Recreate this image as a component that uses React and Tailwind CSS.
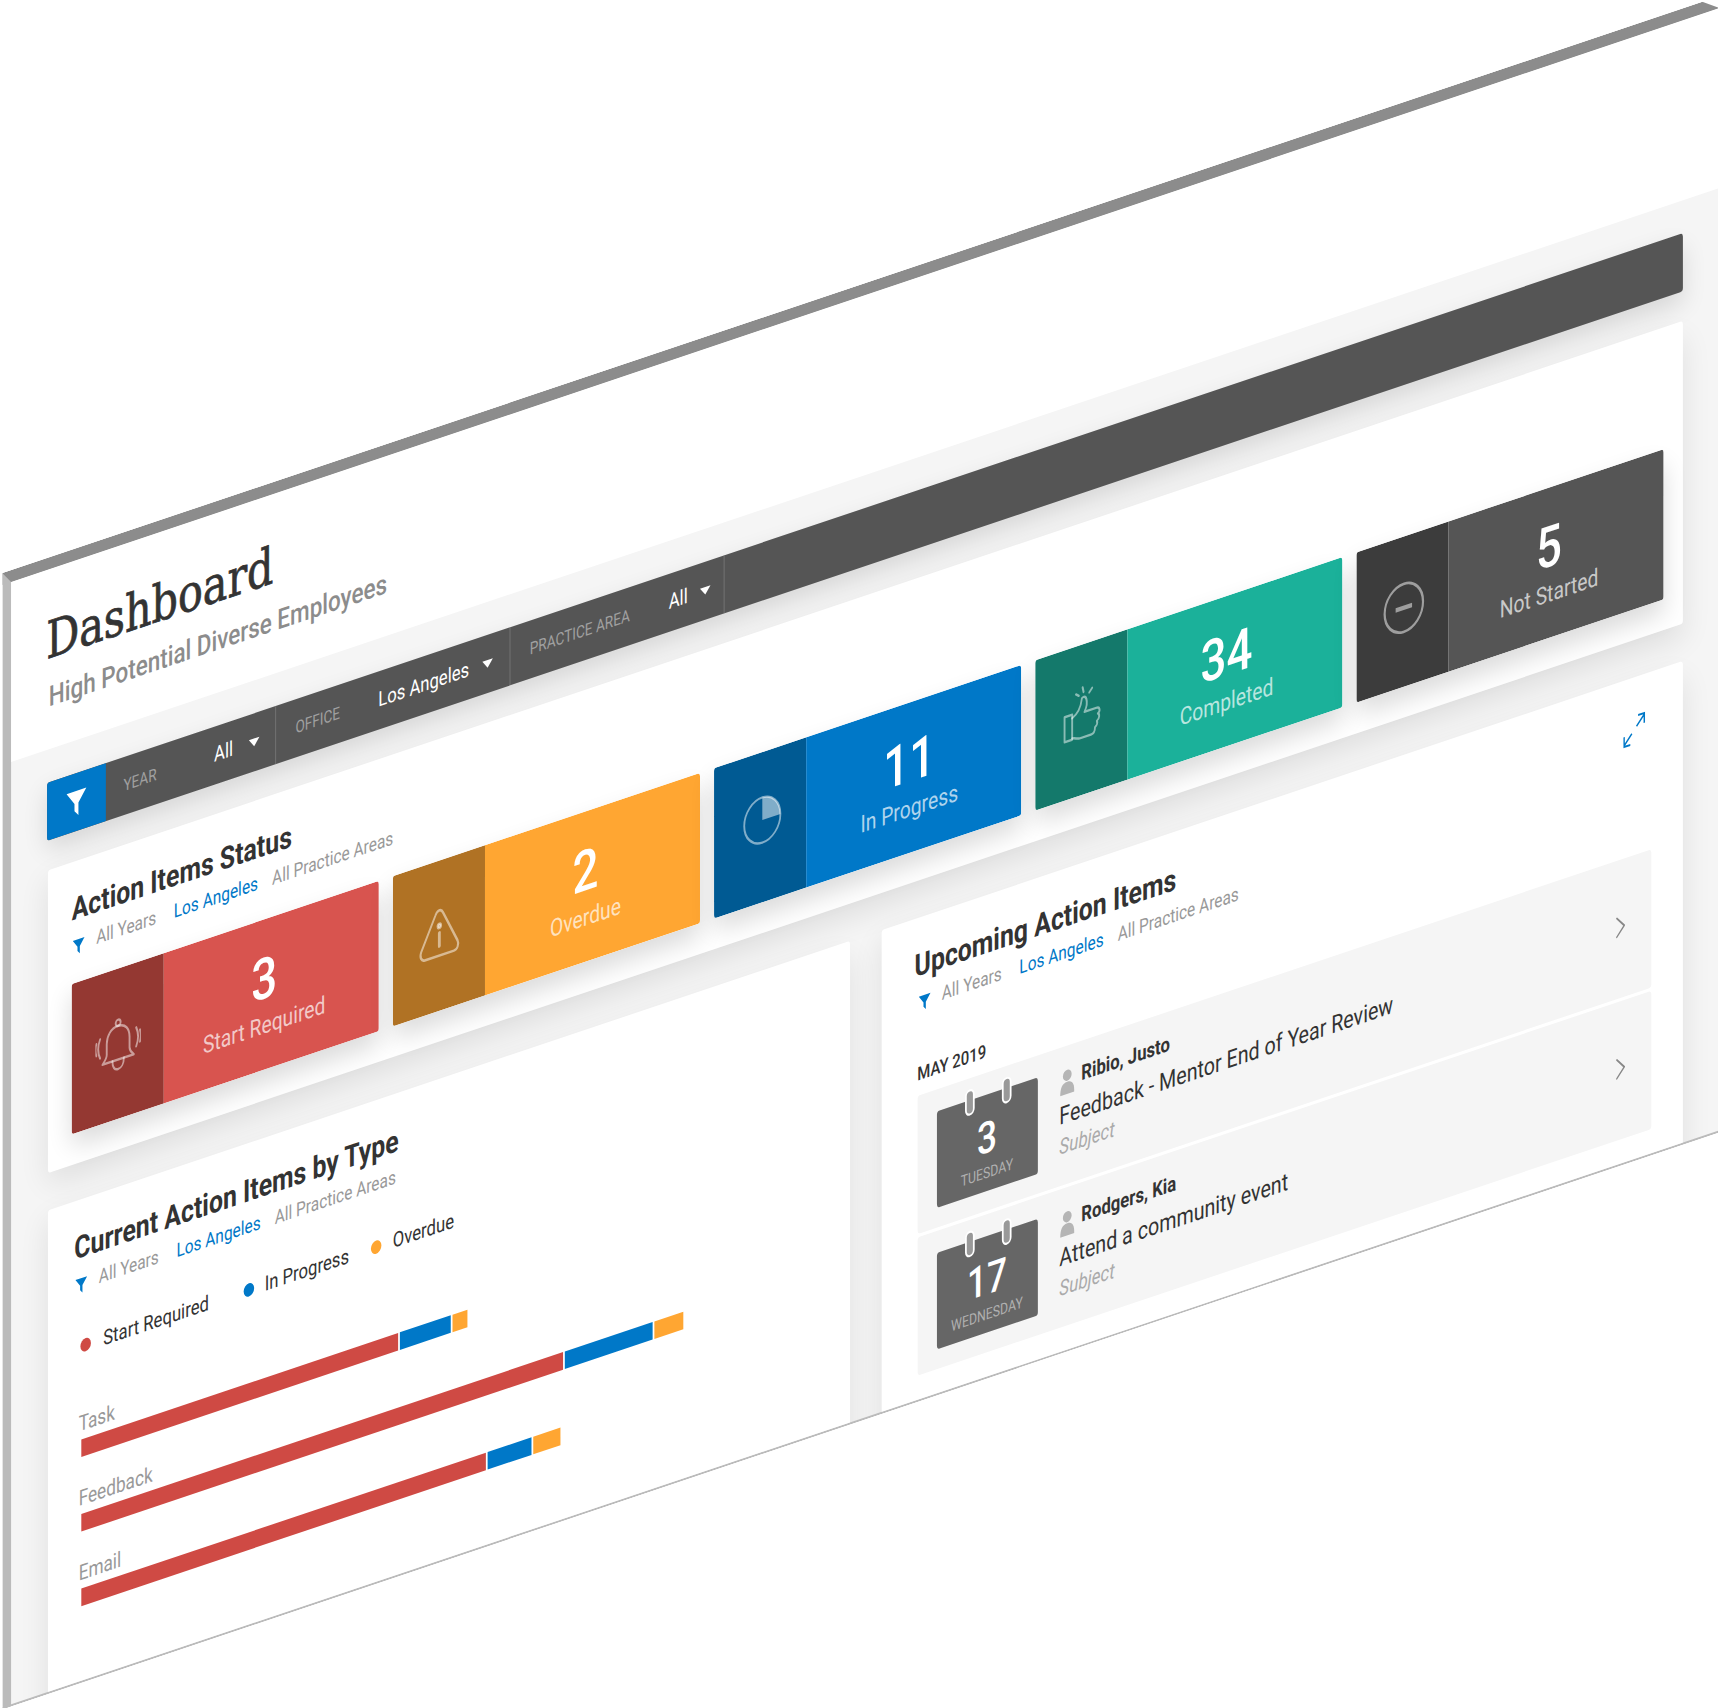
import React from 'react';
import { ChevronRight } from 'lucide-react';

const FunnelIcon = ({ className }) => (
  <svg viewBox="0 0 24 24" className={className} fill="currentColor">
    <path d="M2 3h20l-8 10v10l-4-4v-6z" />
  </svg>
);

const BellIcon = () => (
  <svg viewBox="0 0 48 48" className="w-[52px] h-[52px]" fill="none" stroke="currentColor" strokeWidth="2" strokeLinecap="round" strokeLinejoin="round">
    <circle cx="24" cy="5" r="2.6" />
    <path d="M24 7.600c-7.500 0-12 5.400-12 12.400v9c0 3-2.500 5-4.500 7h33c-2-2-4.500-4-4.500-7v-9c0-7-4.500-12.400-12-12.400z" />
    <path d="M18 36c0 5 2.500 8 6 8s6-3 6-8" />
    <path d="M5 14c-2.500 5-2.500 11 0 16M1 17c-1 3-1 7 0 10M43 14c2.500 5 2.500 11 0 16M47 17c1 3 1 7 0 10" />
  </svg>
);

const WarningIcon = () => (
  <svg viewBox="0 0 48 48" className="w-[52px] h-[52px]" fill="none" stroke="currentColor" strokeWidth="2.2" strokeLinecap="round" strokeLinejoin="round">
    <path d="M24 5c-2 0-3 1-4 3L5 35c-2 4 0 8 4 8h30c4 0 6-4 4-8L28 8c-1-2-2-3-4-3z" />
    <circle cx="24" cy="18" r="1.800" fill="currentColor" />
    <path d="M24 24v11" strokeWidth="3" />
  </svg>
);

const PieIcon = () => (
  <svg viewBox="0 0 48 48" className="w-[46px] h-[46px]" fill="none" stroke="currentColor" strokeWidth="2.2">
    <circle cx="24" cy="24" r="21.500" />
    <path d="M24 24V2.500A21.500 21.500 0 0 1 45.500 24z" fill="currentColor" stroke="none" />
  </svg>
);

const ThumbIcon = () => (
  <svg viewBox="0 0 48 48" className="w-[52px] h-[52px]" fill="none" stroke="currentColor" strokeWidth="2" strokeLinecap="round" strokeLinejoin="round">
    <path d="M5 23h8v21H5z" />
    <path d="M13 26c5-2 9-6 10-13 0-2 4-3 5 1 1 3 0 7-2 10h13c3 0 4 4 1 5 2 1 2 5-1 6 1 2 0 4-2 5 0 3-1 5-4 5H21c-3 0-5-2-8-2" />
    <path d="M25 7l-1-4M31 9l3-3M20 9l-3-2" />
  </svg>
);

const MinusIcon = () => (
  <svg viewBox="0 0 48 48" className="w-[50px] h-[50px]" fill="none" stroke="currentColor" strokeWidth="2.4">
    <circle cx="24" cy="24" r="21" />
    <path d="M15 24h18" strokeWidth="4" />
  </svg>
);

const ExpandIcon = () => (
  <svg viewBox="0 0 28 36" className="w-[25px] h-[32px] mt-[4px] text-[#0078c8]" fill="none" stroke="currentColor" strokeWidth="2">
    <path d="M17 15L27 5M19 4h8v10" />
    <path d="M11 21L1 31M9 32H1V22" />
  </svg>
);

const UserIcon = () => (
  <svg viewBox="0 0 16 24" className="w-[17px] h-[24px] mt-[5px] text-[#b5b5b5]" fill="currentColor">
    <circle cx="8" cy="6" r="5" />
    <path d="M0 23c0-7 2-11 8-11s8 4 8 11z" />
  </svg>
);

const CARDS = [
  { value: '3', label: 'Start Required', dark: 'bg-[#943832]', main: 'bg-[#d8544f] pr-[16px]', nudge: 'ml-[1px] mt-[2px]', icon: <BellIcon /> },
  { value: '2', label: 'Overdue', dark: 'bg-[#b07224]', main: 'bg-[#ffa632] pr-[16px]', nudge: '-mt-[5px]', icon: <WarningIcon /> },
  { value: '11', label: 'In Progress', dark: 'bg-[#005a93]', main: 'bg-[#0078c8] pr-[10px]', nudge: 'ml-[5px] -mt-[14px]', icon: <PieIcon /> },
  { value: '34', label: 'Completed', dark: 'bg-[#14796b]', main: 'bg-[#1bb19a] pr-[19px]', nudge: 'ml-[3px] -mt-[14px]', icon: <ThumbIcon /> },
  { value: '5', label: 'Not Started', dark: 'bg-[#3c3c3c]', main: 'bg-[#555555] pr-[16px]', nudge: 'ml-[2px] -mt-[7px]', icon: <MinusIcon /> },
];

const BARS = [
  { label: 'Task', red: 361, blue: 58, orange: 17 },
  { label: 'Feedback', red: 549, blue: 100, orange: 33 },
  { label: 'Email', red: 461, blue: 50, orange: 31 },
];

const NavSegment = ({ label, value, width, className }) => (
  <div className={`flex items-center h-full border-r border-[#777] ${className}`} style={{ width }}>
    <span className="text-[15.500px] text-[#a0a0a0] uppercase">{label}</span>
    <span className="ml-auto text-[19px] text-white">{value}</span>
  </div>
);

const Caret = ({ className }) => (
  <span className={`w-0 h-0 border-x-[6px] border-x-transparent border-t-[7px] border-t-white ${className}`} />
);

const PanelHeader = ({ title, filterClass = '' }) => (
  <div>
    <h2 className="text-[28.300px] leading-[32px] font-bold text-[#333]">{title}</h2>
    <div className={`flex items-center mt-[6px] h-[20px] text-[17.600px] text-[#999] ${filterClass}`}>
      <FunnelIcon className="w-[16px] h-[16px] text-[#0078c8] mr-[12px] mt-[4px]" />
      <span>All Years</span>
      <span className="ml-[20px] text-[#0078c8]">Los Angeles</span>
      <span className="ml-[16px]">All Practice Areas</span>
    </div>
  </div>
);

const StatusCard = ({ card }) => (
  <div className="flex w-[350px] h-[137px] shrink-0 rounded-[3px] overflow-hidden shadow-[0_12px_24px_rgba(0,0,0,0.14)]">
    <div className={`${card.dark} w-[105px] flex items-center justify-center text-white/50`}>
      <div className={card.nudge}>{card.icon}</div>
    </div>
    <div className={`${card.main} flex-1 flex flex-col items-center justify-center`}>
      <div className="text-[52px] leading-[56px] font-medium text-white">{card.value}</div>
      <div className="text-[22px] leading-[28px] text-white/70">{card.label}</div>
    </div>
  </div>
);

const CalendarBadge = ({ day, weekday }) => (
  <div className="relative w-[115px] h-[88px] shrink-0 rounded-[3px] bg-[#666] flex flex-col items-center">
    <span className="absolute left-[32px] -top-[10px] w-[11px] h-[24px] rounded-full bg-[#999] border-2 border-white" />
    <span className="absolute left-[74px] -top-[10px] w-[11px] h-[24px] rounded-full bg-[#999] border-2 border-white" />
    <div className="mt-[18px] text-[40px] leading-[44px] font-medium text-white">{day}</div>
    <div className="text-[14px] leading-[18px] text-[#b0b0b0]">{weekday}</div>
  </div>
);

const ActionRow = ({ day, weekday, name, title }) => (
  <div className="flex h-[126px] pl-[22px] pt-[20px] pr-[18px] rounded-[3px] bg-[#f5f5f5]">
    <CalendarBadge day={day} weekday={weekday} />
    <div className="ml-[25px] -mt-[2px]">
      <div className="flex items-center h-[24px]">
        <UserIcon />
        <span className="ml-[8px] text-[19px] font-bold text-[#333]">{name}</span>
      </div>
      <div className="mt-[5px] text-[22.400px] leading-[30px] text-[#333]">{title}</div>
      <div className="mt-[2px] text-[19.500px] leading-[24px] italic text-[#aaa]">Subject</div>
    </div>
    <ChevronRight className="ml-auto self-center -mt-[24px] w-[34px] h-[34px] text-[#888]" strokeWidth={1.2} />
  </div>
);

export default function App() {
  return (
    <div className="w-[1720px] h-[1708px] overflow-hidden bg-white font-[Roboto,sans-serif]">
      <div className="w-[1955px] h-[1036px] origin-top-left [transform:matrix(0.8776,-0.2949,0,1.097,2.3,573)] [clip-path:polygon(0_0,1937px_0,1955px_10px,1955px_100%,0_100%)] border-t-[11px] border-l-[10px] border-b-2 border-t-[#8c8c8c] border-l-[#bbbbbb] border-b-[#bbbbbb] bg-[#f5f5f5] overflow-hidden">
        <div className="h-[164px] bg-white pl-[40px] pt-[35px]">
          <h1 className="text-[47px] leading-[60px] text-[#333] font-['DejaVu_Serif',serif] [-webkit-text-stroke:0.7px_#333]">Dashboard</h1>
          <div className="mt-[3px] ml-[3px] text-[25.600px] leading-[36px] font-medium text-[#8c8c8c]">High Potential Diverse Employees</div>
        </div>

        <div className="w-[1945px] pl-[42px] pr-[40px] pt-[30px]">
          <div className="flex h-[53px] -ml-px rounded-[3px] overflow-hidden bg-[#555] shadow-[0_10px_24px_rgba(0,0,0,0.12)]">
            <div className="w-[67px] bg-[#0078c8] flex items-center justify-center text-white">
              <FunnelIcon className="w-[27px] h-[27px]" />
            </div>
            <div className="relative flex items-center">
              <NavSegment label="Year" value="All" width={194} className="pl-[20px] pr-[48px]" />
              <Caret className="absolute left-[163px] top-[23px]" />
            </div>
            <div className="relative flex items-center">
              <NavSegment label="Office" value="Los Angeles" width={267} className="pl-[22px] pr-[46px]" />
              <Caret className="absolute left-[235px] top-[23px]" />
            </div>
            <div className="relative flex items-center">
              <NavSegment label="Practice Area" value="All" width={244} className="pl-[22px] pr-[41px]" />
              <Caret className="absolute left-[216px] top-[23px]" />
            </div>
          </div>

          <div className="mt-[27px] h-[276px] rounded-[3px] bg-white px-[27px] pt-[28px] shadow-[0_12px_30px_rgba(0,0,0,0.09)]">
            <PanelHeader title="Action Items Status" />
            <div className="flex gap-[16px] mt-[25px]">
              {CARDS.map((card) => <StatusCard key={card.label} card={card} />)}
            </div>
          </div>

          <div className="grid grid-cols-2 gap-[36px] mt-[34px]">
            <div className="h-[500px] rounded-[3px] bg-white pl-[30px] pt-[28px] shadow-[0_12px_30px_rgba(0,0,0,0.09)]">
              <PanelHeader title="Current Action Items by Type" />
              <div className="flex items-center mt-[38px] h-[20px] text-[19px] text-[#333]">
                <div className="flex items-center w-[193px] pl-[7px]"><span className="w-[12px] h-[12px] rounded-full bg-[#cf4a44] mr-[14px]" />Start Required</div>
                <div className="flex items-center w-[145px]"><span className="w-[12px] h-[12px] rounded-full bg-[#0078c8] mr-[12px]" />In Progress</div>
                <div className="flex items-center"><span className="w-[12px] h-[12px] rounded-full bg-[#ffa632] mr-[13px]" />Overdue</div>
              </div>
              <div className="flex flex-col gap-[22px] mt-[45px]">
                {BARS.map((bar) => (
                  <div key={bar.label}>
                    <div className="pl-[5px] pt-[4px] h-[28px] text-[19.600px] leading-[24px] text-[#999]">{bar.label}</div>
                    <div className="flex gap-[2px] h-[16px] mt-[2px] ml-[8px]">
                      <div className="bg-[#cf4a44]" style={{ width: bar.red }} />
                      <div className="bg-[#0078c8]" style={{ width: bar.blue }} />
                      <div className="bg-[#ffa632]" style={{ width: bar.orange }} />
                    </div>
                  </div>
                ))}
              </div>
            </div>

            <div className="h-[500px] rounded-[3px] bg-white pt-[28px] shadow-[0_12px_30px_rgba(0,0,0,0.09)]">
              <div className="flex justify-between items-start pl-[38px] pr-[43px]">
                <PanelHeader title="Upcoming Action Items" filterClass="ml-[3px]" />
                <ExpandIcon />
              </div>
              <div className="ml-[41px] w-[836px]">
                <div className="mt-[44px] mb-[8px] text-[17px] leading-[24px] font-medium text-[#333]">MAY 2019</div>
                <div className="flex flex-col gap-[3px]">
                  <ActionRow day="3" weekday="TUESDAY" name="Ribio, Justo" title="Feedback - Mentor End of Year Review" />
                  <ActionRow day="17" weekday="WEDNESDAY" name="Rodgers, Kia" title="Attend a community event" />
                </div>
              </div>
            </div>
          </div>
        </div>
      </div>
    </div>
  );
}
